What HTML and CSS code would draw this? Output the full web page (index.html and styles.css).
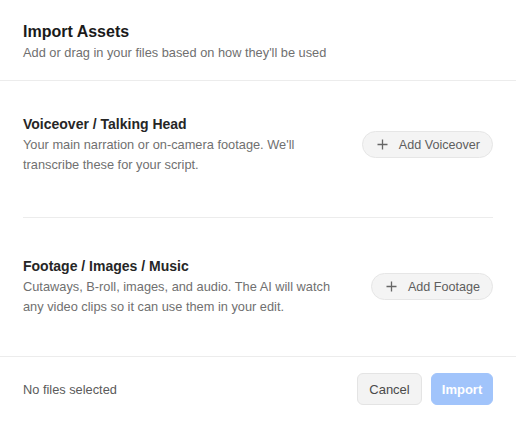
FILE: index.html
```html
<!DOCTYPE html>
<html lang="en">
<head>
    <meta charset="UTF-8">
    <meta name="viewport" content="width=device-width, initial-scale=1.0">
    <title>Import Assets</title>
    <link rel="stylesheet" href="styles.css">
</head>
<body>
    <div class="dialog">
        <header class="dialog-header">
            <h1>Import Assets</h1>
            <p>Add or drag in your files based on how they'll be used</p>
        </header>

        <div class="dialog-body">
            <section class="asset-group first">
                <div class="asset-info">
                    <h2>Voiceover / Talking Head</h2>
                    <p>Your main narration or on-camera footage. We'll<br>transcribe these for your script.</p>
                </div>
                <button class="add-btn">
                    <svg width="11" height="11" viewBox="0 0 11 11"><path d="M5.5 0.5v10M0.5 5.5h10" stroke="#666" stroke-width="1.3" fill="none"/></svg>
                    Add Voiceover
                </button>
            </section>

            <section class="asset-group second">
                <div class="asset-info">
                    <h2>Footage / Images / Music</h2>
                    <p>Cutaways, B-roll, images, and audio. The AI will watch<br>any video clips so it can use them in your edit.</p>
                </div>
                <button class="add-btn">
                    <svg width="11" height="11" viewBox="0 0 11 11"><path d="M5.5 0.5v10M0.5 5.5h10" stroke="#666" stroke-width="1.3" fill="none"/></svg>
                    Add Footage
                </button>
            </section>
        </div>

        <footer class="dialog-footer">
            <span class="status">No files selected</span>
            <div class="actions">
                <button class="btn cancel">Cancel</button>
                <button class="btn import" disabled>Import</button>
            </div>
        </footer>
    </div>
</body>
</html>
```

FILE: styles.css
```css
* {
    margin: 0;
    padding: 0;
    box-sizing: border-box;
}

body {
    font-family: "Liberation Sans", Arial, sans-serif;
    color: #1c1c1c;
    background: #fff;
    width: 516px;
    height: 421px;
    overflow: hidden;
}

.dialog {
    width: 516px;
    height: 421px;
    background: #fff;
    border-radius: 10px;
    display: flex;
    flex-direction: column;
}

.dialog-header {
    padding: 21px 23px 17px;
    border-bottom: 1px solid #ececec;
}

.dialog-header h1 {
    font-size: 16px;
    font-weight: 700;
    line-height: 22px;
    color: #1a1a1a;
}

.dialog-header p {
    font-size: 12.8px;
    line-height: 20px;
    color: #6f6f6f;
}

.dialog-body {
    padding: 0 23px;
    flex: 1;
}

.asset-group {
    display: flex;
    align-items: center;
    justify-content: space-between;
}

.asset-group.first {
    padding: 33px 0 42px;
    border-bottom: 1px solid #ececec;
}

.asset-group.second {
    padding: 38px 0 37px;
}

.asset-info h2 {
    font-size: 14px;
    font-weight: 700;
    line-height: 20px;
    color: #262626;
}

.asset-info p {
    font-size: 12.8px;
    line-height: 20px;
    color: #707070;
    margin-top: 1px;
}

.add-btn {
    display: flex;
    align-items: center;
    gap: 11px;
    height: 27px;
    padding: 0 12px 0 14px;
    border: 1px solid #e6e6e6;
    border-radius: 14px;
    background: #f4f4f4;
    font-family: inherit;
    font-size: 12.6px;
    color: #5e5e5e;
}

.dialog-footer {
    display: flex;
    align-items: center;
    justify-content: space-between;
    height: 65px;
    padding: 0 23px;
    border-top: 1px solid #ececec;
}

.status {
    font-size: 12.8px;
    color: #5a5a5a;
}

.actions {
    display: flex;
    gap: 9px;
}

.btn {
    height: 32px;
    border-radius: 6px;
    font-family: inherit;
    font-size: 13px;
}

.cancel {
    width: 65px;
    background: #f3f3f3;
    border: 1px solid #e4e4e4;
    color: #4a4a4a;
}

.import {
    width: 62px;
    background: #a1c4fb;
    border: 1px solid #a1c4fb;
    color: #fff;
    font-weight: 700;
}
```
